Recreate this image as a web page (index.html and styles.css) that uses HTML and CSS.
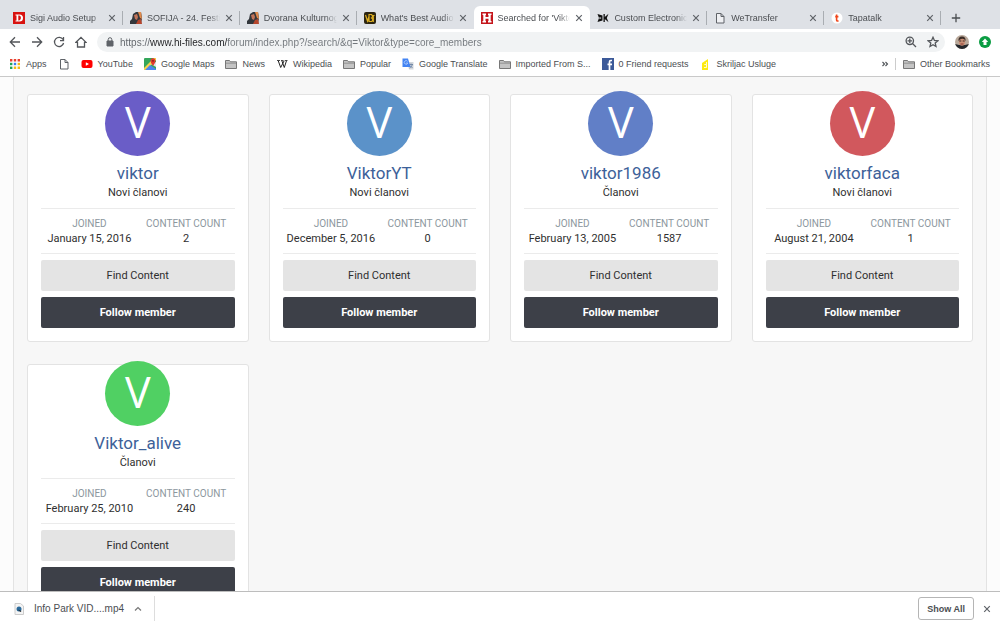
FILE: index.html
```html
<!DOCTYPE html>
<html lang="en">
<head>
    <meta charset="UTF-8">
    <meta name="viewport" content="width=device-width, initial-scale=1.0">
    <title>Searched for 'Viktor'</title>
    <link rel="stylesheet" href="styles.css">
</head>
<body>
    <!-- Shared icons -->
    <svg class="sprite" aria-hidden="true">
        <symbol id="close" viewBox="0 0 8 8"><path d="M1.2 1.2l5.6 5.6M6.8 1.2L1.2 6.8" stroke="#5f6368" stroke-width="1.2" fill="none"/></symbol>
        <symbol id="page" viewBox="0 0 12 12"><path d="M2.5 1.5h4.5l3 3v6.5h-7.5zM7 1.5v3h3" fill="#fff" fill-opacity=".5" stroke="#5f6368"/></symbol>
        <symbol id="folder" viewBox="0 0 12 12"><path d="M.5 10.5v-8h4l1 1.3h6v6.7z" fill="#c4c4c4" stroke="#777"/><path d="M1 5.2h10" stroke="#888" stroke-width=".8"/></symbol>
        <symbol id="portrait" viewBox="0 0 12 12"><path d="M0 12V9l2-2 1-5 3-2h5l1 6-1 6z" fill="#33373c"/><path d="M4 3l3-1 1 3-1 3-2-1z" fill="#c2745a"/><path d="M8 8l3-1 1 5H6z" fill="#b5452c"/><path d="M8 0h3l1 7-2-1z" fill="#e08a4c"/></symbol>
    </svg>

    <div class="tab-strip">
        <div class="tab">
            <svg class="icon" viewBox="0 0 12 12"><rect width="12" height="12" fill="#d8120f"/><path d="M2.5 2.5h4a3.5 3.5 0 0 1 0 7h-4v-1h1v-5h-1zM5.3 3.6v4.8h.8c2.4 0 2.4-4.8 0-4.8z" fill="#fff" fill-rule="evenodd"/></svg>
            <a class="tab-title" href="#">Sigi Audio Setup</a>
            <button class="close" aria-label="Close tab"><svg><use href="#close"/></svg></button>
        </div>
        <div class="tab">
            <svg class="icon"><use href="#portrait"/></svg>
            <a class="tab-title" href="#">SOFIJA - 24. Festi</a>
            <button class="close" aria-label="Close tab"><svg><use href="#close"/></svg></button>
        </div>
        <div class="tab">
            <svg class="icon"><use href="#portrait"/></svg>
            <a class="tab-title" href="#">Dvorana Kulturnog</a>
            <button class="close" aria-label="Close tab"><svg><use href="#close"/></svg></button>
        </div>
        <div class="tab before-active">
            <svg class="icon" viewBox="0 0 12 12"><rect width="12" height="12" rx="2" fill="#2b2411"/><path d="M1.5 3l2 6 1.5-4.5M5 2.5v7h2.5q2.5-2 0-3.5q2-1.5 0-3.5zM8 3.5h2.5M9.3 3.5V10" fill="none" stroke="#dcae22" stroke-width="1.2"/></svg>
            <a class="tab-title" href="#">What's Best Audio</a>
            <button class="close" aria-label="Close tab"><svg><use href="#close"/></svg></button>
        </div>
        <div class="tab active">
            <svg class="icon" viewBox="0 0 12 12"><rect width="12" height="12" fill="#c4161c"/><path d="M1.500 1.500h3.500v1.500h-.5v2h3v-2h-.5v-1.500h3.500v1.500h-.8v6h.8v1.500h-3.500v-1.500h.5v-2.300h-3v2.300h.5v1.500h-3.500v-1.500h.8v-6h-.8z" fill="#fff"/></svg>
            <a class="tab-title" href="#">Searched for 'Vikto</a>
            <button class="close" aria-label="Close tab"><svg><use href="#close"/></svg></button>
        </div>
        <div class="tab">
            <svg class="icon" viewBox="0 0 12 12"><path d="M.5 2l5 1.500v5L.5 10l1.500-4zM6.500 2v8h1.300V7l3.700 3.200L9.800 6l1.700-4.200L7.800 5V2z" fill="#111"/><path d="M2.500 5l2 1-2 1.200z" fill="#dee1e6"/></svg>
            <a class="tab-title" href="#">Custom Electronics</a>
            <button class="close" aria-label="Close tab"><svg><use href="#close"/></svg></button>
        </div>
        <div class="tab">
            <svg class="icon"><use href="#page"/></svg>
            <a class="tab-title" href="#">WeTransfer</a>
            <button class="close" aria-label="Close tab"><svg><use href="#close"/></svg></button>
        </div>
        <div class="tab">
            <svg class="icon" viewBox="0 0 12 12"><circle cx="6" cy="6" r="5.500" fill="#fff"/><path d="M5.600 2.500v5.600q0 1.200 1.900.8M4.200 4.600h3.200" fill="none" stroke="#f0471c" stroke-width="1.600"/></svg>
            <a class="tab-title" href="#">Tapatalk</a>
            <button class="close" aria-label="Close tab"><svg><use href="#close"/></svg></button>
        </div>
        <button class="new-tab" aria-label="New tab"><svg viewBox="0 0 10 10"><path d="M5 .8v8.400M.8 5h8.400" stroke="#4a4d51" stroke-width="1.300"/></svg></button>
    </div>

    <div class="toolbar">
        <button class="nav" aria-label="Back"><svg viewBox="0 0 12 12"><path d="M11 6H1.500M6 1.300L1.300 6 6 10.700"/></svg></button>
        <button class="nav" aria-label="Forward"><svg viewBox="0 0 12 12"><path d="M1 6h9.500M6 1.300L10.700 6 6 10.700"/></svg></button>
        <button class="nav" aria-label="Reload"><svg viewBox="0 0 12 12"><path d="M10 3.500A4.600 4.600 0 1 0 10.600 7M10.500 1v3.600H7"/></svg></button>
        <button class="nav" aria-label="Home"><svg viewBox="0 0 12 12"><path d="M1 6.300L6 1.300l5 5H9.500v4.700h-7V6.300z"/></svg></button>
        <form class="address">
            <svg class="lock" viewBox="0 0 8 10"><path d="M1 4h6v5H1z" fill="#5f6368" stroke="#5f6368"/><path d="M2.200 4V2.500a1.800 1.800 0 0 1 3.600 0V4" fill="none" stroke="#5f6368"/></svg>
            <input class="url" type="text" aria-label="Address" value="https://www.hi-files.com/forum/index.php?/search/&amp;q=Viktor&amp;type=core_members">
            <button class="tool" type="button" aria-label="Zoom"><svg viewBox="0 0 12 12"><path d="M7.500 7.500L11 11M2.500 4.800h4.600M4.800 2.500v4.600"/><circle cx="4.800" cy="4.800" r="3.700"/></svg></button>
            <button class="tool" type="button" aria-label="Bookmark"><svg viewBox="0 0 12 12"><path d="M6 1.300l1.400 3.200 3.500.3-2.700 2.300.8 3.400-3-1.800-3 1.800.8-3.400L1.100 4.800l3.500-.3z"/></svg></button>
        </form>
        <button class="profile" aria-label="Profile"><svg viewBox="0 0 14 14"><defs><clipPath id="round"><circle cx="7" cy="7" r="7"/></clipPath></defs><g clip-path="url(#round)"><rect width="14" height="14" fill="#b9a99b"/><path d="M0 14V9l4 1h6l4-1v5z" fill="#24272c"/><ellipse cx="7" cy="6.500" rx="3.200" ry="4.200" fill="#c98f76"/><path d="M3.500 6Q3 1.500 7 1.500T10.500 6Q9.500 3.500 7 3.700T3.500 6z" fill="#3b2c26"/><path d="M4.300 6h2M7.700 6h2" stroke="#41302b"/><path d="M5.500 9h3" stroke="#8e3c35"/></g></svg></button>
        <button class="update" aria-label="Update"><svg viewBox="0 0 12 12"><circle cx="6" cy="6" r="6" fill="#0b9d43"/><path d="M6 2.500L9.200 6H7.500v3h-3V6H2.800z" fill="#fff"/></svg></button>
    </div>

    <nav class="bookmarks">
        <a href="#"><svg class="icon" viewBox="0 0 12 12"><g fill="#e8402f"><path d="M1 1h2.400v2.400H1zM4.800 1h2.400v2.400H4.800zM8.600 1H11v2.400H8.600z"/></g><path d="M1 4.800h2.400v2.400H1z" fill="#23a455"/><path d="M4.800 4.800h2.400v2.400H4.800z" fill="#3b7ded"/><path d="M8.600 4.800H11v2.400H8.600z" fill="#f6b913"/><path d="M1 8.600h2.400V11H1z" fill="#23a455"/><path d="M4.800 8.600h2.400V11H4.800zM8.600 8.600H11V11H8.600z" fill="#f6b913"/></svg>Apps</a>
        <a href="#" aria-label="Untitled page"><svg class="icon"><use href="#page"/></svg></a>
        <a href="#"><svg class="icon" viewBox="0 0 12 12"><rect x=".5" y="2" width="11" height="8" rx="2" fill="#f00"/><path d="M4.800 4.200v3.600L8 6z" fill="#fff"/></svg>YouTube</a>
        <a href="#"><svg class="icon" viewBox="0 0 12 12"><rect width="12" height="12" rx="1" fill="#34a65a"/><path d="M0 10L10 0h2v2L2 12H0z" fill="#f8d34b"/><path d="M6 7l6 4v1H1z" fill="#4b86ee"/><path d="M7 6l5 3V4z" fill="#e0e3e6"/><path d="M9 8Q6.500 5 6.500 2.800a2.500 2.500 0 0 1 5 0Q11.500 5 9 8z" fill="#e33b2e"/><circle cx="9" cy="2.800" r=".9" fill="#801c16"/></svg>Google Maps</a>
        <a href="#"><svg class="icon"><use href="#folder"/></svg>News</a>
        <a href="#"><svg class="icon" viewBox="0 0 12 12"><path d="M1 2.500h3M5 2.500h2.500M9 2.500h2.500" stroke="#222" stroke-width=".8"/><path d="M2.200 2.700L4.700 9.500 8.200 2.700M5.800 2.700l2.500 6.800L10.500 2.700" fill="none" stroke="#222"/></svg>Wikipedia</a>
        <a href="#"><svg class="icon"><use href="#folder"/></svg>Popular</a>
        <a href="#"><svg class="icon" viewBox="0 0 12 12"><path d="M5 4h6.500v7.500H7z" fill="#d3d7dc"/><path d="M7 6.500h4M9 5.500v1M10.500 6.500Q9.500 9 7.500 10M8 7.500l2.500 2.500" fill="none" stroke="#657c9d" stroke-width=".8"/><path d="M.5.500h5.500l2.500 8.500h-8z" fill="#4384f3"/><path d="M5.500 3.300a1.800 1.800 0 1 0 .3 1.700H4.200" fill="none" stroke="#bcd4fb" stroke-width=".8"/></svg>Google Translate</a>
        <a href="#"><svg class="icon"><use href="#folder"/></svg>Imported From S...</a>
        <a href="#"><svg class="icon" viewBox="0 0 12 12"><rect width="12" height="12" fill="#3c5a99"/><path d="M10 2.500H8.800Q7.500 2.500 7.500 4v8M5.500 6.300H10" fill="none" stroke="#fff" stroke-width="1.700"/></svg>0 Friend requests</a>
        <a href="#"><svg class="icon" viewBox="0 0 12 12"><path d="M2 12V5L8 1v11z" fill="#fdea10"/><path d="M6.500 4v2.500H4.300M6.500 6.500v3H4" fill="none" stroke="#fff" stroke-width=".8"/></svg>Skriljac Usluge</a>
        <button class="more" aria-label="More bookmarks"><svg viewBox="0 0 8 8"><path d="M1.500 2L3.500 4l-2 2M4.500 2l2 2-2 2" fill="none" stroke="#4d5156" stroke-width="1.100"/></svg></button>
        <a class="other" href="#"><svg class="icon"><use href="#folder"/></svg>Other Bookmarks</a>
    </nav>

    <main class="page">
        <div class="results">
            <div class="card">
                <div class="avatar purple">V</div>
                <h3><a href="#">viktor</a></h3>
                <p class="group">Novi članovi</p>
                <dl class="stats">
                    <div><dt>JOINED</dt><dd>January 15, 2016</dd></div>
                    <div><dt>CONTENT COUNT</dt><dd>2</dd></div>
                </dl>
                <button class="btn light">Find Content</button>
                <button class="btn dark">Follow member</button>
            </div>
            <div class="card">
                <div class="avatar blue">V</div>
                <h3><a href="#">ViktorYT</a></h3>
                <p class="group">Novi članovi</p>
                <dl class="stats">
                    <div><dt>JOINED</dt><dd>December 5, 2016</dd></div>
                    <div><dt>CONTENT COUNT</dt><dd>0</dd></div>
                </dl>
                <button class="btn light">Find Content</button>
                <button class="btn dark">Follow member</button>
            </div>
            <div class="card">
                <div class="avatar indigo">V</div>
                <h3><a href="#">viktor1986</a></h3>
                <p class="group">Članovi</p>
                <dl class="stats">
                    <div><dt>JOINED</dt><dd>February 13, 2005</dd></div>
                    <div><dt>CONTENT COUNT</dt><dd>1587</dd></div>
                </dl>
                <button class="btn light">Find Content</button>
                <button class="btn dark">Follow member</button>
            </div>
            <div class="card">
                <div class="avatar red">V</div>
                <h3><a href="#">viktorfaca</a></h3>
                <p class="group">Novi članovi</p>
                <dl class="stats">
                    <div><dt>JOINED</dt><dd>August 21, 2004</dd></div>
                    <div><dt>CONTENT COUNT</dt><dd>1</dd></div>
                </dl>
                <button class="btn light">Find Content</button>
                <button class="btn dark">Follow member</button>
            </div>
            <div class="card">
                <div class="avatar green">V</div>
                <h3><a href="#">Viktor_alive</a></h3>
                <p class="group">Članovi</p>
                <dl class="stats">
                    <div><dt>JOINED</dt><dd>February 25, 2010</dd></div>
                    <div><dt>CONTENT COUNT</dt><dd>240</dd></div>
                </dl>
                <button class="btn light">Find Content</button>
                <button class="btn dark">Follow member</button>
            </div>
        </div>
    </main>

    <footer class="downloads">
        <div class="download">
            <svg class="file" viewBox="0 0 10 12"><path d="M1 .5h5.500L9.500 3v8.500H1z" fill="#f4f4f4" stroke="#ccc"/><circle cx="5" cy="6" r="2.500" fill="#2b6a9b"/><path d="M3.500 6.500l3 2.500 1-1z" fill="#222"/></svg>
            <a href="#">Info Park VID....mp4</a>
            <button class="menu" aria-label="Download options"><svg viewBox="0 0 8 8"><path d="M1 5.500L4 2.500l3 3" fill="none" stroke="#777" stroke-width="1.200"/></svg></button>
        </div>
        <button class="show-all">Show All</button>
        <button class="close-bar" aria-label="Close downloads"><svg><use href="#close"/></svg></button>
    </footer>
</body>
</html>
```
FILE: styles.css
```css
* {
    box-sizing: border-box;
}
body {
    display: flex;
    flex-direction: column;
    height: 100vh;
    margin: 0;
    overflow: hidden;
    background-color: #fff;
    color: #4b4e52;
    font-family: "Liberation Sans", Arial, sans-serif;
    font-size: 9px;
}
a {
    color: inherit;
    text-decoration: none;
}
button {
    padding: 0;
    border: 0;
    background: none;
    color: inherit;
    font-family: inherit;
}
svg {
    display: block;
}
.sprite {
    position: absolute;
    width: 0;
    height: 0;
}
.icon {
    flex: none;
    width: 12px;
    height: 12px;
}

/* Tabs */
.tab-strip {
    display: flex;
    flex: none;
    padding: 6px 39px 0 6px;
    background-color: #dee1e6;
}
.tab {
    display: flex;
    flex: 1;
    align-items: center;
    gap: 5px;
    min-width: 0;
    height: 23px;
    padding: 0 7px;
    background: linear-gradient(#a9adb2, #a9adb2) no-repeat right center / 1px 14px;
}
.before-active {
    background: none;
}
.active {
    border-radius: 6px 6px 0 0;
    background: #fff;
}
.tab-title {
    flex: 1;
    overflow: hidden;
    white-space: nowrap;
    -webkit-mask-image: linear-gradient(to right, #000 85%, transparent);
    mask-image: linear-gradient(to right, #000 85%, transparent);
}
.close svg {
    width: 8px;
    height: 8px;
}
.new-tab {
    width: 20px;
    padding-left: 10px;
}
.new-tab svg {
    width: 10px;
    height: 10px;
}

/* Toolbar */
.toolbar {
    display: flex;
    flex: none;
    align-items: center;
    gap: 10px;
    height: 26px;
    padding: 0 9px;
}
.nav svg,
.tool svg {
    width: 12px;
    height: 12px;
    fill: none;
    stroke: #53565a;
    stroke-width: 1.3;
}
.address {
    display: flex;
    flex: 1;
    align-items: center;
    gap: 10px;
    height: 20px;
    margin: 0;
    padding: 0 6px 0 9px;
    border-radius: 10px;
    background-color: #f1f3f4;
}
.lock {
    width: 8px;
    height: 10px;
    margin-right: -4px;
}
.url {
    flex: 1;
    min-width: 0;
    padding: 0;
    border: 0;
    outline: 0;
    background: linear-gradient(to right, #5f6368 30px, #202124 30px, #202124 107px, #72777c 107px);
    -webkit-background-clip: text;
    background-clip: text;
    color: transparent;
    font-family: inherit;
    font-size: 10px;
}
.profile svg {
    width: 14px;
    height: 14px;
}
.update svg {
    width: 12px;
    height: 12px;
}

/* Bookmarks */
.bookmarks {
    display: flex;
    flex: none;
    align-items: center;
    gap: 11px;
    height: 22px;
    padding: 0 10px 3px 9px;
    border-bottom: 1px solid #c9c9c9;
    white-space: nowrap;
}
.bookmarks a {
    display: flex;
    align-items: center;
    gap: 5px;
}
.more {
    margin-left: auto;
}
.more svg {
    width: 8px;
    height: 8px;
}
.bookmarks .other {
    margin-left: -5px;
    padding-left: 7px;
    border-left: 1px solid #ccc;
}

/* Members */
.page {
    flex: 1;
    min-height: 0;
    padding: 0 13px;
    overflow: hidden;
    background-color: #fcfcfc;
    color: #2f2f2f;
    font-family: Roboto, "Noto Sans", sans-serif;
    font-size: 11px;
}
.results {
    display: grid;
    grid-template-columns: repeat(4, 1fr);
    gap: 22px 20px;
    padding: 17px 13px;
    border: 1px solid #e3e3e3;
    border-width: 0 1px;
    background-color: #f7f7f7;
}
.card {
    display: flex;
    flex-direction: column;
    height: 248px;
    padding: 0 13px;
    border: 1px solid #e3e3e3;
    border-radius: 3px;
    background-color: #fff;
    text-align: center;
}
.avatar {
    flex: none;
    align-self: center;
    width: 65px;
    height: 65px;
    margin-top: -4px;
    border-radius: 50%;
    color: #fff;
    font-family: "Open Sans", sans-serif;
    font-size: 43px;
    line-height: 62px;
}
.purple {
    background-color: #6a5dc7;
}
.blue {
    background-color: #5b92c9;
}
.indigo {
    background-color: #617fc7;
}
.red {
    background-color: #d1585d;
}
.green {
    background-color: #50d063;
}
.card h3 {
    margin: 6px 0 0;
    color: #3d6199;
    font-size: 17px;
    font-weight: 400;
    line-height: 22px;
}
.group {
    margin: 1px 0 7px;
    line-height: 16px;
}
.stats {
    display: grid;
    grid-template-columns: 1fr 1fr;
    margin: 0 0 6px;
    padding: 7px 0;
    border: 1px solid #ebebeb;
    border-width: 1px 0;
    line-height: 15px;
    white-space: nowrap;
}
.stats dt {
    color: #8c979e;
    font-size: 10px;
}
.stats dd {
    margin: 0;
}
.btn {
    height: 31px;
    border-radius: 2px;
    font-size: 11px;
}
.light {
    margin-bottom: 6px;
    background-color: #e4e4e4;
}
.dark {
    background-color: #3d4048;
    color: #fff;
    font-weight: 700;
}

/* Downloads */
.downloads {
    display: flex;
    flex: none;
    align-items: center;
    gap: 9px;
    height: 34px;
    padding: 0 9px 0 14px;
    border-top: 1px solid #bdbdbd;
}
.download {
    display: flex;
    align-items: center;
    gap: 10px;
    height: 25px;
    margin-right: auto;
    padding-right: 12px;
    border-right: 1px solid #ddd;
    font-size: 10px;
}
.file {
    width: 10px;
    height: 12px;
}
.menu svg,
.close-bar svg {
    width: 8px;
    height: 8px;
}
.show-all {
    height: 23px;
    padding: 0 8px;
    border: 1px solid #b5b5b5;
    border-radius: 3px;
    font-size: 9px;
    font-weight: 700;
}
```
